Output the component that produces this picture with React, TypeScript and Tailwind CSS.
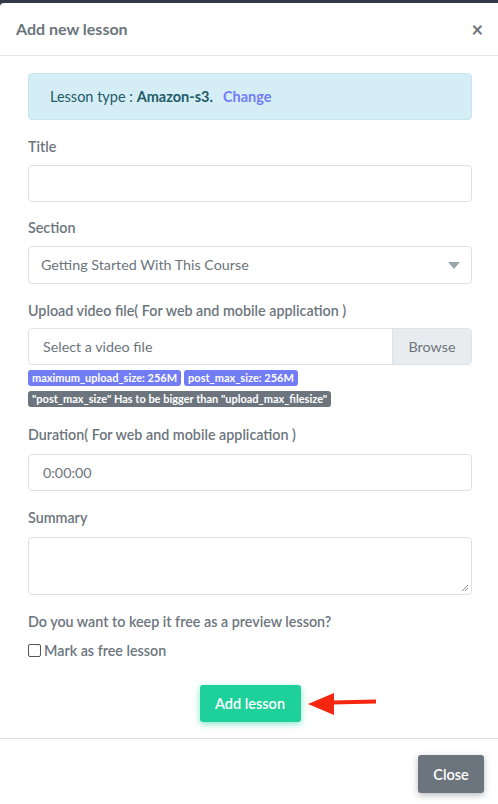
import React from "react";

export default function App() {
  const font = { fontFamily: "Lato, 'Noto Sans', sans-serif" };
  return (
    <div className="w-[498px] h-[804px] bg-[#313a46] overflow-hidden" style={font}>
      <div className="h-[3px]" />
      <div className="bg-white rounded-tl-[4px] h-[801px] flex flex-col">
        <div className="h-[53px] flex items-center justify-between pl-[16px] pr-[15px] border-b border-[#e3e6ea]">
          <h5 className="text-[16px] font-bold text-[#6c757d]">Add new lesson</h5>
          <span className="text-[#6c757d] text-[20px] font-bold leading-none">×</span>
        </div>
        <div className="pl-[28px] pr-[26px] pt-[17px] pb-[16px]">
          <div className="h-[47px] bg-[#d5eef6] border border-[#c4e6ef] rounded-[4px] flex items-center pl-[21px] text-[14.5px] text-[#215b68]">
            <span>Lesson type :&nbsp;</span>
            <b className="font-bold">Amazon-s3.</b>
            <span className="ml-[10px] font-bold text-[#727cf5]">Change</span>
          </div>

          <label className="block mt-[17px] text-[14.3px] font-semibold text-[#6c757d] leading-[20px]">Title</label>
          <div className="mt-[8px] h-[37px] border border-[#dee2e6] rounded-[4px]" />

          <label className="block mt-[16px] text-[14.3px] font-semibold text-[#6c757d] leading-[20px]">Section</label>
          <div className="mt-[8px] h-[38px] border border-[#dee2e6] rounded-[4px] flex items-center justify-between pl-[12px] pr-[11px]">
            <span className="text-[14.3px] text-[#6c757d]">Getting Started With This Course</span>
            <svg width="12" height="7" viewBox="0 0 12 7"><path d="M0 0h12L6 7z" fill="#98a6ad" /></svg>
          </div>

          <label className="block mt-[17px] text-[14.3px] font-semibold text-[#6c757d] leading-[20px]">Upload video file( For web and mobile application )</label>
          <div className="mt-[7px] h-[37px] border border-[#dee2e6] rounded-[4px] flex overflow-hidden">
            <div className="flex-1 flex items-center pl-[14px] text-[14.3px] text-[#6c757d]">Select a video file</div>
            <div className="w-[79px] bg-[#e9ecef] border-l border-[#dee2e6] flex items-center justify-center text-[14.3px] text-[#6c757d]">Browse</div>
          </div>
          <div className="mt-[5px] flex gap-[3px]">
            <span className="h-[16px] px-[4px] rounded-[3px] bg-[#727cf5] text-white text-[11px] font-bold flex items-center">maximum_upload_size: 256M</span>
            <span className="h-[16px] px-[4px] rounded-[3px] bg-[#727cf5] text-white text-[11px] font-bold flex items-center">post_max_size: 256M</span>
          </div>
          <div className="mt-[5px] flex">
            <span className="h-[16px] px-[4px] rounded-[3px] bg-[#6c757d] text-white text-[11px] font-bold flex items-center">"post_max_size" Has to be bigger than "upload_max_filesize"</span>
          </div>

          <label className="block mt-[18px] text-[14.3px] font-semibold text-[#6c757d] leading-[20px]">Duration( For web and mobile application )</label>
          <div className="mt-[9px] h-[37px] border border-[#dee2e6] rounded-[4px] flex items-center pl-[14px] text-[14.3px] text-[#6c757d]">0:00:00</div>

          <label className="block mt-[17px] text-[14.3px] font-semibold text-[#6c757d] leading-[20px]">Summary</label>
          <div className="mt-[9px] h-[58px] border border-[#dee2e6] rounded-[4px] relative">
            <svg className="absolute right-[2px] bottom-[2px]" width="8" height="8" viewBox="0 0 8 8">
              <path d="M7 1L1 7M7 4L4 7" stroke="#888" strokeWidth="1" />
            </svg>
          </div>

          <label className="block mt-[17px] text-[14.3px] font-semibold text-[#6c757d] leading-[20px]">Do you want to keep it free as a preview lesson?</label>
          <div className="mt-[8px] flex items-center">
            <span className="w-[13px] h-[13px] border border-[#555] rounded-[2px] bg-white" />
            <span className="ml-[3px] text-[14.3px] font-semibold text-[#6c757d]">Mark as free lesson</span>
          </div>

          <div className="mt-[24px] flex justify-center items-center relative">
            <div className="w-[101px] h-[37px] rounded-[3px] bg-[#1ed19a] text-white text-[14.5px] font-semibold flex items-center justify-center shadow-[0_2px_6px_0_rgba(10,207,151,0.5)]">Add lesson</div>
            <svg className="absolute left-[280px] top-[6px]" width="70" height="26" viewBox="0 0 70 26">
              <path d="M68 10.5L24 11.5" stroke="#f5260f" strokeWidth="4" />
              <path d="M0 13L26 2L26 24Z" fill="#f5260f" />
            </svg>
          </div>
        </div>
        <div className="border-t border-[#dee2e6] flex justify-end pt-[16px] pr-[14px]">
          <div className="w-[66px] h-[38px] rounded-[3px] bg-[#6c757d] text-white text-[14.5px] font-semibold flex items-center justify-center shadow-[0_2px_6px_0_rgba(108,117,125,0.5)]">Close</div>
        </div>
      </div>
    </div>
  );
}
